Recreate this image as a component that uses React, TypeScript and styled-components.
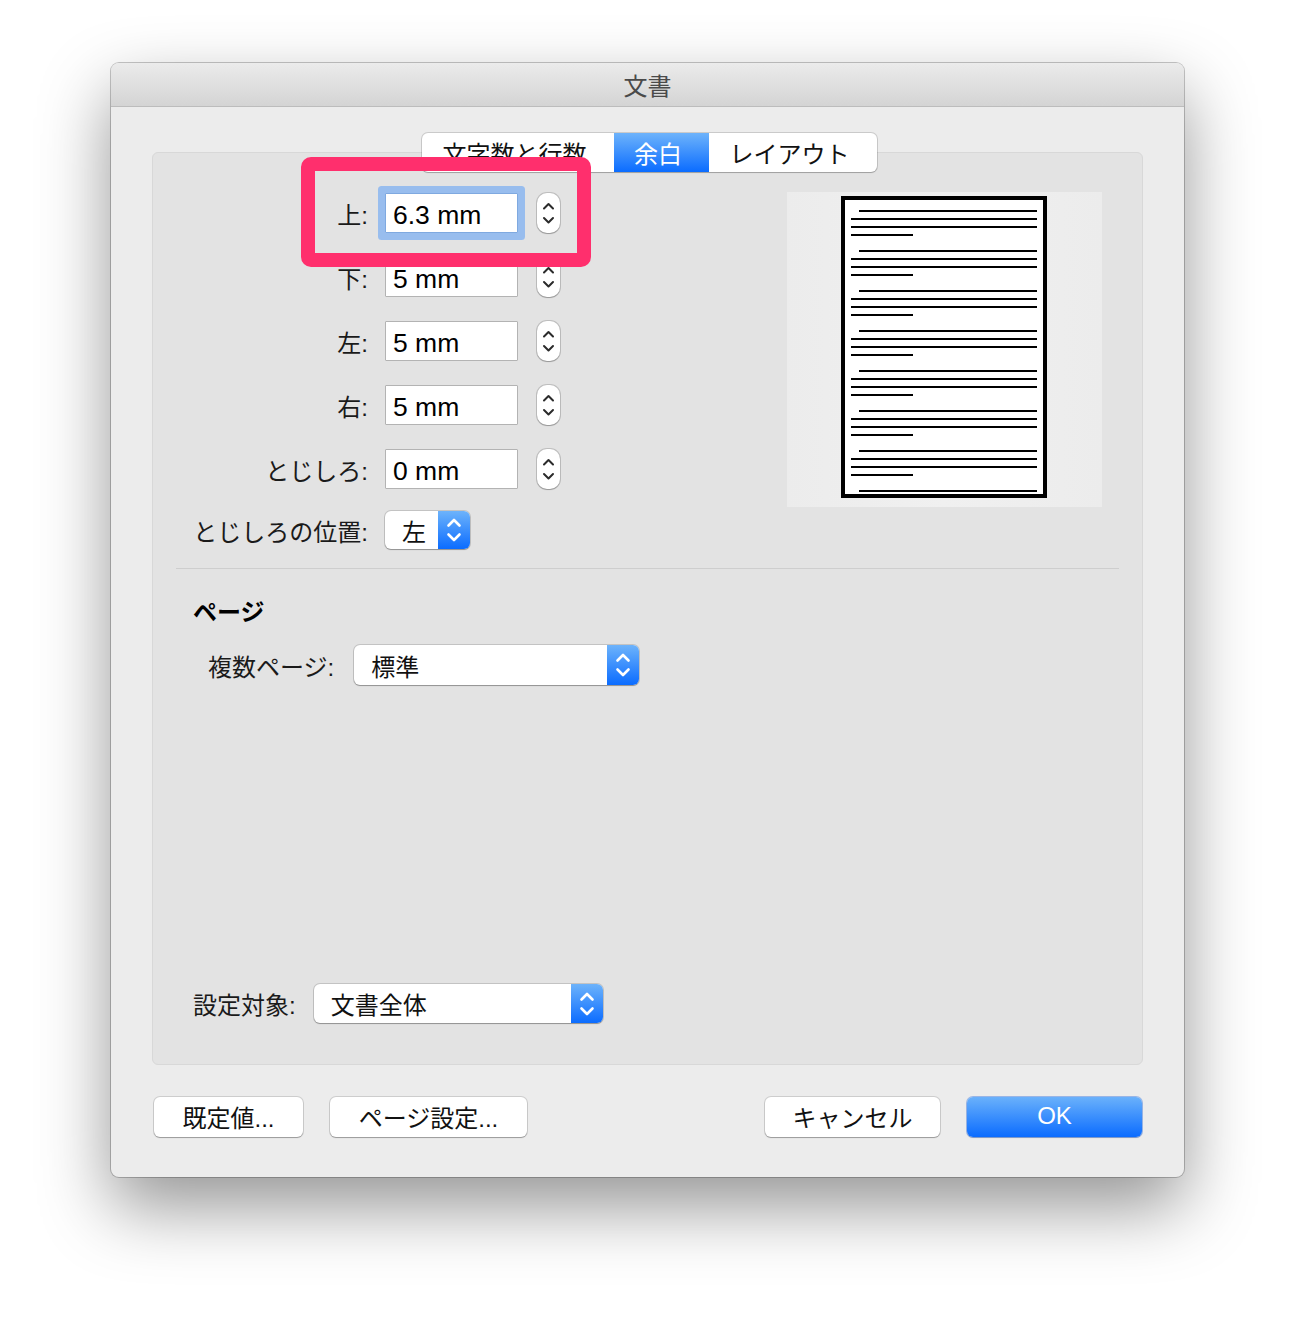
import styled, { createGlobalStyle } from 'styled-components';

const GlobalStyle = createGlobalStyle`
    body {
        margin: 0;
        background: #ffffff;
        font-family: 'Liberation Sans', 'Noto Sans CJK JP', sans-serif;
        color: #1a1a1a;
    }
`;

const Page = styled.div`
    padding: 63px 0 0 111px;
    height: 1338px;
    box-sizing: border-box;
`;

const Window = styled.div`
    position: relative;
    width: 1073px;
    background: #ececec;
    border-radius: 8px;
    box-shadow: 0 0 0 1px rgba(0, 0, 0, 0.22), 0 30px 70px rgba(0, 0, 0, 0.42);
`;

const TitleBar = styled.div`
    height: 44px;
    box-sizing: border-box;
    border-radius: 8px 8px 0 0;
    background: linear-gradient(#ebebeb, #d4d4d4);
    border-bottom: 1px solid #bcbcbc;
    display: flex;
    align-items: center;
    justify-content: center;
    font-size: 24px;
    color: #4a4a4a;
`;

const Body = styled.div`
    padding: 26px 41px 40px;
    display: flex;
    flex-direction: column;
`;

const TabBar = styled.div`
    position: relative;
    z-index: 1;
    align-self: center;
    display: flex;
    height: 39px;
    margin-bottom: -20px;
    margin-left: 3px;
    background: #ffffff;
    border-radius: 6px;
    box-shadow: 0 0 0 1px rgba(0, 0, 0, 0.14), 0 1px 1px rgba(0, 0, 0, 0.18);
    overflow: hidden;
`;

const Tab = styled.div<{ $width: number; $active?: boolean }>`
    width: ${({ $width }) => $width}px;
    display: flex;
    align-items: center;
    justify-content: center;
    padding-right: 6px;
    box-sizing: border-box;
    font-size: 24px;
    color: ${({ $active }) => ($active ? '#ffffff' : '#111111')};
    background: ${({ $active }) => ($active ? 'linear-gradient(#6db3fb, #0b6cff)' : 'transparent')};
`;

const Panel = styled.div`
    height: 913px;
    box-sizing: border-box;
    background: #e3e3e3;
    border: 1px solid #d8d8d8;
    border-radius: 6px;
    padding: 39px 23px 0 23px;
    display: flex;
    flex-direction: column;
`;

const TopSection = styled.div`
    display: flex;
    justify-content: space-between;
    align-items: flex-start;
    padding: 0 17px;
`;

const Form = styled.div`
    display: flex;
    flex-direction: column;
    gap: 24px;
    margin-top: 1px;
`;

const Row = styled.div<{ $height?: number; $shift?: number }>`
    display: flex;
    align-items: center;
    height: ${({ $height }) => $height ?? 40}px;
    margin-top: ${({ $shift }) => $shift ?? 0}px;
`;

const Label = styled.div`
    width: 175px;
    margin-right: 17px;
    text-align: right;
    font-size: 24px;
    white-space: nowrap;
`;

const Field = styled.div<{ $focused?: boolean }>`
    width: 133px;
    height: 40px;
    box-sizing: border-box;
    background: #ffffff;
    border: 1px solid ${({ $focused }) => ($focused ? '#7fa9e0' : '#b3b3b3')};
    border-radius: 1px;
    padding: 4px 0 0 7px;
    display: flex;
    align-items: center;
    font-size: 26.5px;
    color: #000000;
    box-shadow: ${({ $focused }) => ($focused ? '0 0 0 7px #98bdee' : 'none')};
`;

const Stepper = styled.div`
    width: 23px;
    height: 40px;
    margin-left: 19px;
    box-sizing: border-box;
    background: #ffffff;
    border-radius: 10px;
    box-shadow: 0 0 0 1px rgba(0, 0, 0, 0.16), 0 1px 1px rgba(0, 0, 0, 0.2);
    display: flex;
`;

const PopUp = styled.div<{ $width: number; $height?: number }>`
    width: ${({ $width }) => $width}px;
    height: ${({ $height }) => $height ?? 40}px;
    background: #ffffff;
    border-radius: 6px;
    box-shadow: 0 0 0 1px rgba(0, 0, 0, 0.14), 0 1px 1px rgba(0, 0, 0, 0.25);
    display: flex;
    overflow: hidden;
`;

const PopUpText = styled.div`
    flex: 1;
    padding-left: 17px;
    display: flex;
    align-items: center;
    font-size: 24px;
    color: #111111;
`;

const PopUpArrows = styled.div`
    width: 32px;
    background: linear-gradient(#6db3fb, #0b6cff);
    display: flex;
    align-items: center;
    justify-content: center;
`;

const Preview = styled.div`
    width: 315px;
    height: 315px;
    background: linear-gradient(90deg, #ececec, #f0f0f0 50%, #ececec);
`;

const Separator = styled.div`
    height: 1px;
    margin-top: 19px;
    background: #cecece;
`;

const SectionTitle = styled.div`
    margin-top: 29px;
    padding-left: 17px;
    line-height: 30px;
    font-size: 24px;
    font-weight: 700;
    color: #000000;
`;

const InlineRow = styled.div<{ $indent: number; $top: number; $gap: number; $bottom?: number; $auto?: boolean }>`
    display: flex;
    align-items: center;
    gap: ${({ $gap }) => $gap}px;
    padding-left: ${({ $indent }) => $indent}px;
    margin-top: ${({ $auto, $top }) => ($auto ? 'auto' : `${$top}px`)};
    margin-bottom: ${({ $bottom }) => $bottom ?? 0}px;
`;

const InlineLabel = styled.div`
    font-size: 24px;
    white-space: nowrap;
`;

const Footer = styled.div`
    display: flex;
    align-items: center;
    margin-top: 32px;
    padding: 0 1px 0 2px;
`;

const Button = styled.div<{ $width: number; $primary?: boolean; $gapBefore?: number }>`
    width: ${({ $width }) => $width}px;
    height: 40px;
    margin-left: ${({ $gapBefore }) => $gapBefore ?? 0}px;
    padding-bottom: 2px;
    box-sizing: border-box;
    border-radius: 6px;
    display: flex;
    align-items: center;
    justify-content: center;
    font-size: 24px;
    color: ${({ $primary }) => ($primary ? '#ffffff' : '#111111')};
    background: ${({ $primary }) => ($primary ? 'linear-gradient(#6ab1fb, #0b6cff)' : '#ffffff')};
    box-shadow: ${({ $primary }) =>
        $primary
            ? '0 0 0 1px rgba(0, 80, 220, 0.35), 0 1px 1px rgba(0, 0, 0, 0.2)'
            : '0 0 0 1px rgba(0, 0, 0, 0.13), 0 1px 1px rgba(0, 0, 0, 0.25)'};
`;

const Highlight = styled.div`
    position: absolute;
    z-index: 10;
    left: 190px;
    top: 94px;
    width: 290px;
    height: 110px;
    box-sizing: border-box;
    border: 14px solid #ff2f6d;
    border-radius: 10px;
    pointer-events: none;
`;

const StepperIcon = () => (
    <svg width="23" height="40" viewBox="0 0 23 40">
        <path
            d="M7 15.5 L11.5 11 L16 15.5 M7 25 L11.5 29.5 L16 25"
            fill="none"
            stroke="#2b2b2b"
            strokeWidth="2"
            strokeLinecap="round"
            strokeLinejoin="round"
        />
    </svg>
);

const PopUpIcon = () => (
    <svg width="20" height="30" viewBox="0 0 20 30">
        <path
            d="M4.5 10.5 L10 5 L15.5 10.5 M4.5 19.5 L10 25 L15.5 19.5"
            fill="none"
            stroke="#ffffff"
            strokeWidth="2.6"
            strokeLinecap="round"
            strokeLinejoin="round"
        />
    </svg>
);

const PagePreview = () => {
    const lines: JSX.Element[] = [];
    for (let p = 0; p < 8; p++) {
        const base = 18 + p * 40;
        lines.push(<rect key={`${p}a`} x={72} y={base} width={178} height={2} />);
        if (p === 7) break;
        lines.push(<rect key={`${p}b`} x={64} y={base + 8} width={186} height={2} />);
        lines.push(<rect key={`${p}c`} x={64} y={base + 16} width={186} height={2} />);
        lines.push(<rect key={`${p}d`} x={64} y={base + 24} width={62} height={2} />);
    }
    return (
        <svg width="315" height="315" viewBox="0 0 315 315">
            <rect x={56} y={6} width={202} height={298} fill="#ffffff" stroke="#000000" strokeWidth={4} />
            <g fill="#000000">{lines}</g>
        </svg>
    );
};

const margins = [
    { label: '上:', value: '6.3 mm', focused: true },
    { label: '下:', value: '5 mm' },
    { label: '左:', value: '5 mm' },
    { label: '右:', value: '5 mm' },
    { label: 'とじしろ:', value: '0 mm' },
];

const App = () => (
    <>
        <GlobalStyle />
        <Page>
            <Window>
                <TitleBar>文書</TitleBar>
                <Body>
                    <TabBar>
                        <Tab $width={192}>文字数と行数</Tab>
                        <Tab $width={95} $active>
                            余白
                        </Tab>
                        <Tab $width={168}>レイアウト</Tab>
                    </TabBar>
                    <Panel>
                        <TopSection>
                            <Form>
                                {margins.map((m) => (
                                    <Row key={m.label}>
                                        <Label>{m.label}</Label>
                                        <Field $focused={m.focused}>{m.value}</Field>
                                        <Stepper>
                                            <StepperIcon />
                                        </Stepper>
                                    </Row>
                                ))}
                                <Row $height={38} $shift={-2}>
                                    <Label>とじしろの位置:</Label>
                                    <PopUp $width={85} $height={38}>
                                        <PopUpText>左</PopUpText>
                                        <PopUpArrows>
                                            <PopUpIcon />
                                        </PopUpArrows>
                                    </PopUp>
                                </Row>
                            </Form>
                            <Preview>
                                <PagePreview />
                            </Preview>
                        </TopSection>
                        <Separator />
                        <SectionTitle>ページ</SectionTitle>
                        <InlineRow $indent={32} $top={17} $gap={20}>
                            <InlineLabel>複数ページ:</InlineLabel>
                            <PopUp $width={285}>
                                <PopUpText>標準</PopUpText>
                                <PopUpArrows>
                                    <PopUpIcon />
                                </PopUpArrows>
                            </PopUp>
                        </InlineRow>
                        <InlineRow $indent={17} $top={0} $gap={18} $bottom={41} $auto>
                            <InlineLabel>設定対象:</InlineLabel>
                            <PopUp $width={289} $height={39}>
                                <PopUpText>文書全体</PopUpText>
                                <PopUpArrows>
                                    <PopUpIcon />
                                </PopUpArrows>
                            </PopUp>
                        </InlineRow>
                    </Panel>
                    <Footer>
                        <Button $width={149}>既定値...</Button>
                        <Button $width={197} $gapBefore={27}>
                            ページ設定...
                        </Button>
                        <Button $width={175} style={{ marginLeft: 'auto' }}>
                            キャンセル
                        </Button>
                        <Button $width={175} $gapBefore={27} $primary>
                            OK
                        </Button>
                    </Footer>
                </Body>
                <Highlight />
            </Window>
        </Page>
    </>
);

export default App;
